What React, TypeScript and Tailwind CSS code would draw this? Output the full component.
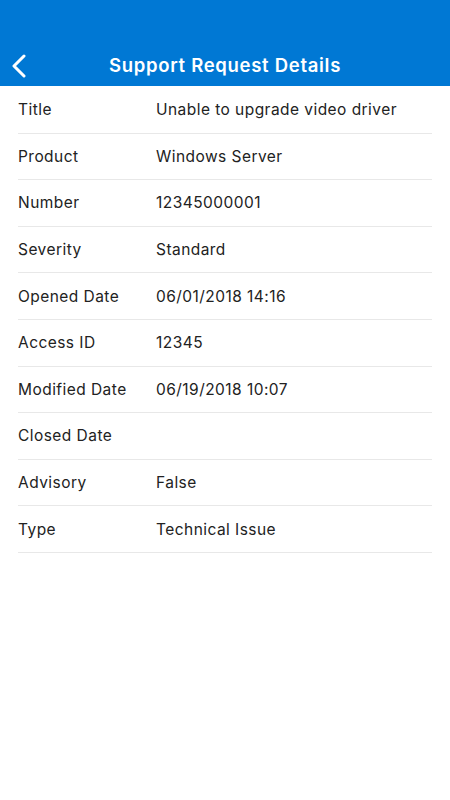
import React from "react";

const rows: [string, string][] = [
  ["Title", "Unable to upgrade video driver"],
  ["Product", "Windows Server"],
  ["Number", "12345000001"],
  ["Severity", "Standard"],
  ["Opened Date", "06/01/2018 14:16"],
  ["Access ID", "12345"],
  ["Modified Date", "06/19/2018 10:07"],
  ["Closed Date", ""],
  ["Advisory", "False"],
  ["Type", "Technical Issue"],
];

export default function App() {
  return (
    <div className="w-[450px] h-[800px] bg-white" style={{ fontFamily: "Inter, 'Open Sans', sans-serif" }}>
      <div className="h-[86px] bg-[#0078d4] relative flex items-end">
        <div className="h-[44px] w-full flex items-center justify-center relative">
          <svg className="absolute left-[10px] top-[12px]" width="18" height="24" viewBox="0 0 18 24" fill="none">
            <path d="M14 2 L4 12 L14 22" stroke="white" strokeWidth="3" strokeLinecap="round" strokeLinejoin="round" />
          </svg>
          <span className="text-white text-[18.5px] font-semibold tracking-[0.7px] pt-[3px]">Support Request Details</span>
        </div>
      </div>
      <div className="px-[18px] pt-[1px]">
        {rows.map(([k, v]) => (
          <div key={k} className="h-[46.6px] flex items-center border-b border-[#e8e8e8] text-[15.5px] text-[#222] tracking-[0.45px]">
            <div className="w-[138px]">{k}</div>
            <div>{v}</div>
          </div>
        ))}
      </div>
    </div>
  );
}
